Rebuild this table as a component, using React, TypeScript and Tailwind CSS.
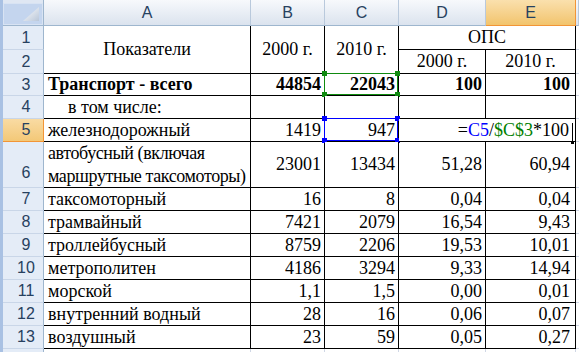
import React from "react";

const hdrFont = "font-['Liberation_Sans','Arial',sans-serif] text-[16px] text-[#27415f]";
const serif = "font-['Liberation_Serif','Times_New_Roman',serif] text-[18px] text-black";

const colHdr =
  "flex items-center justify-center border-r border-b border-r-[#b9c9dc] border-b-[#9eb6ce] bg-linear-to-b from-[#f7f9fc] to-[#dbe3ee] " +
  hdrFont;
const colHdrSel =
  "flex items-center justify-center border-r border-b border-r-[#f29536] border-b-[#f29536] bg-linear-to-b from-[#fae0ad] to-[#f2c46c] " +
  hdrFont;
const rowHdr =
  "flex items-center justify-center pl-[6px] border-r border-b border-r-[#9eb6ce] border-b-[#c9d6e8] bg-[#e4ecf7] " + hdrFont;
const rowHdrSel =
  "flex items-center justify-center pl-[6px] border-r border-b border-r-[#f29536] border-b-[#f29536] bg-linear-to-b from-[#f9dba3] to-[#f3c877] " +
  hdrFont;
const cell = "bg-white border-r border-b border-black flex items-center whitespace-nowrap overflow-hidden " + serif;
const fcell = "bg-white border-b border-[#d0d7e5]";

type Row = {
  n: number;
  a: string;
  b: string;
  c: string;
  d: string;
  e: string;
  bold?: boolean;
  indent?: boolean;
};

const rows: Row[] = [
  { n: 3, a: "Транспорт - всего", b: "44854", c: "22043", d: "100", e: "100", bold: true },
  { n: 4, a: "в том числе:", b: "", c: "", d: "", e: "", indent: true },
  { n: 5, a: "железнодорожный", b: "1419", c: "947", d: "", e: "" },
  { n: 6, a: "", b: "23001", c: "13434", d: "51,28", e: "60,94" },
  { n: 7, a: "таксомоторный", b: "16", c: "8", d: "0,04", e: "0,04" },
  { n: 8, a: "трамвайный", b: "7421", c: "2079", d: "16,54", e: "9,43" },
  { n: 9, a: "троллейбусный", b: "8759", c: "2206", d: "19,53", e: "10,01" },
  { n: 10, a: "метрополитен", b: "4186", c: "3294", d: "9,33", e: "14,94" },
  { n: 11, a: "морской", b: "1,1", c: "1,5", d: "0,00", e: "0,01" },
  { n: 12, a: "внутренний водный", b: "28", c: "16", d: "0,06", e: "0,07" },
  { n: 13, a: "воздушный", b: "23", c: "59", d: "0,05", e: "0,27" },
];

function RefBox({ color }: { color: string }) {
  const sq = "absolute w-[5px] h-[5px]";
  return (
    <div className="pointer-events-none absolute left-[-1px] top-[-1px] right-0 bottom-0">
      <div className="absolute inset-0 border" style={{ borderColor: color }} />
      <div className={sq + " left-[-2px] top-[-2px]"} style={{ background: color }} />
      <div className={sq + " right-[-2px] top-[-2px]"} style={{ background: color }} />
      <div className={sq + " left-[-2px] bottom-[-2px]"} style={{ background: color }} />
      <div className={sq + " right-[-2px] bottom-[-2px]"} style={{ background: color }} />
    </div>
  );
}

export default function App() {
  return (
    <div className="w-[579px] h-[352px] overflow-hidden bg-white flex">
      <div className="w-[3px] shrink-0 bg-[#a9c1e3]" />
      <div className="grid flex-1 grid-cols-[41px_207px_74px_74px_87px_90px_1fr] grid-rows-[26px_24px_24px_22px_23px_23px_46px_23px_23px_23px_23px_23px_23px_23px_1fr]">
        {/* header row */}
        <div className="relative border-r border-b border-r-[#9eb6ce] border-b-[#9eb6ce] bg-[#dfe7f3] pt-[3px]">
          <div className="h-full w-full bg-[#c4d5ee] border border-[#d8e3f3] relative">
            <svg className="absolute right-[3px] bottom-[3px]" width="16" height="14" viewBox="0 0 16 14">
              <defs>
                <linearGradient id="tri" x1="0" y1="0" x2="1" y2="1">
                  <stop offset="0" stopColor="#ffffff" />
                  <stop offset="1" stopColor="#b9c6d8" />
                </linearGradient>
              </defs>
              <polygon points="16,0 16,14 0,14" fill="url(#tri)" />
            </svg>
          </div>
        </div>
        <div className={colHdr}>A</div>
        <div className={colHdr}>B</div>
        <div className={colHdr}>C</div>
        <div className={colHdr}>D</div>
        <div className={colHdrSel}>E</div>
        <div className={colHdr} />

        {/* row 1 */}
        <div className={rowHdr}>1</div>
        <div className={cell + " row-span-2 justify-center"}>Показатели</div>
        <div className={cell + " row-span-2 justify-center"}>2000 г.</div>
        <div className={cell + " row-span-2 justify-center"}>2010 г.</div>
        <div className={cell + " col-span-2 justify-center"}>ОПС</div>
        <div className={fcell} />

        {/* row 2 */}
        <div className={rowHdr}>2</div>
        <div className={cell + " justify-center"}>2000 г.</div>
        <div className={cell + " justify-center"}>2010 г.</div>
        <div className={fcell} />

        {rows.map((r) => (
          <React.Fragment key={r.n}>
            <div className={r.n === 5 ? rowHdrSel : rowHdr + (r.n === 6 ? " items-end pb-[2px]" : "")}>{r.n}</div>
            <div
              className={
                cell +
                (r.bold ? " font-bold" : "") +
                (r.indent ? " pl-[24px]" : " pl-[4px]") +
                (r.n === 6 ? " flex-col items-start justify-center leading-[23px]" : "")
              }
            >
              {r.n === 6 ? (
                <>
                  <span className="tracking-[-0.4px]">автобусный (включая</span>
                  <span className="tracking-[-0.4px]">маршрутные таксомоторы)</span>
                </>
              ) : (
                r.a
              )}
            </div>
            <div className={cell + " justify-end pr-[3px]" + (r.bold ? " font-bold" : "")}>{r.b}</div>
            <div className={cell + " relative overflow-visible justify-end pr-[3px]" + (r.bold ? " font-bold" : "")}>
              {r.c}
              {r.n === 3 && <RefBox color="#0f8a0f" />}
              {r.n === 5 && <RefBox color="#0000ff" />}
            </div>
            {r.n === 5 ? (
              <div className={cell + " col-span-2 justify-end pr-[6px] relative overflow-visible"}>
                <span>
                  =<span className="text-[#0000ff]">C5</span>/<span className="text-[#008000]">$C$3</span>*100
                </span>
                <div className="absolute right-[2px] top-[4px] bottom-[-2px] w-[1px] bg-black" />
                <div className="absolute right-[1px] bottom-[-3px] w-[3px] h-[3px] bg-black" />
              </div>
            ) : (
              <>
                <div className={cell + " justify-end pr-[3px]" + (r.bold ? " font-bold" : "")}>{r.d}</div>
                <div className={cell + " justify-end pr-[5px]" + (r.bold ? " font-bold" : "")}>{r.e}</div>
              </>
            )}
            <div className={fcell} />
          </React.Fragment>
        ))}

        {/* row 14 partial */}
        <div className="border-r border-r-[#9eb6ce] bg-[#e4ecf7]" />
        <div className="bg-white border-r border-[#d0d7e5]" />
        <div className="bg-white border-r border-[#d0d7e5]" />
        <div className="bg-white border-r border-[#d0d7e5]" />
        <div className="bg-white border-r border-[#d0d7e5]" />
        <div className="bg-white border-r border-[#d0d7e5]" />
        <div className="bg-white" />
      </div>
    </div>
  );
}
